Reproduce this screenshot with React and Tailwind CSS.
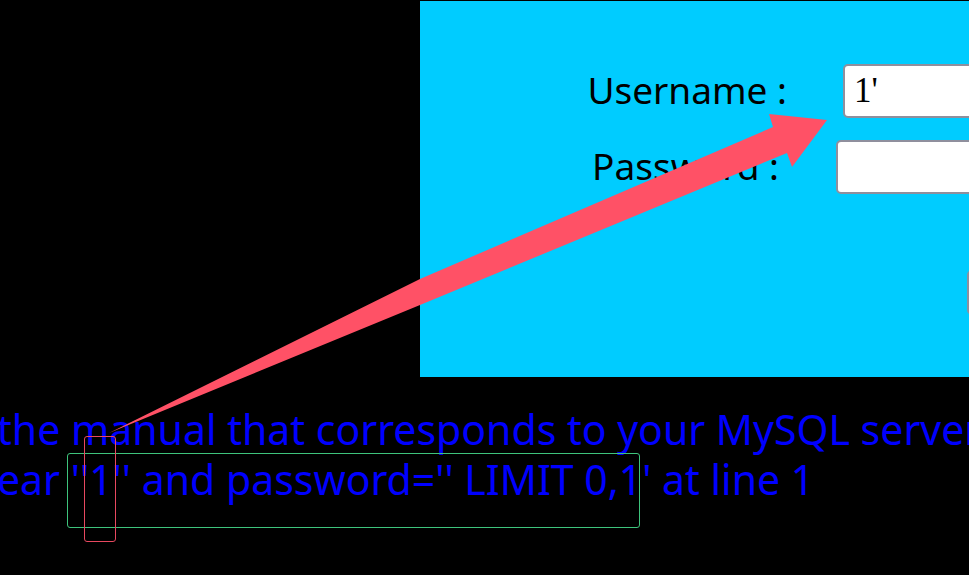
import React from "react";

// ─── Login panel (cyan form, cut off by the window on the right) ─────────────
function LoginPanel() {
  return (
    <div className="w-[549px] h-[376px] mt-px bg-[#00ccff] overflow-hidden shrink-0">
      <div className="pt-[63px] flex flex-col gap-[22px]">
        <div className="flex items-center">
          <label className="w-[367px] shrink-0 -mt-[4px] text-right text-[37px] text-black leading-none">
            Username :
          </label>
          <input
            readOnly
            value="1'"
            className="ml-[56px] w-[200px] h-[54px] shrink-0 rounded-[5px] border-2 border-[#8f8f9d] bg-white pl-[9px] text-[35px] text-black font-['Liberation_Serif',serif] outline-none"
          />
        </div>
        <div className="flex items-center">
          <label className="w-[359px] shrink-0 -mt-[4px] text-right text-[37px] text-black leading-none">
            Password :
          </label>
          <input
            readOnly
            type="password"
            className="ml-[57px] w-[200px] h-[54px] shrink-0 rounded-[5px] border-2 border-[#8f8f9d] bg-white outline-none"
          />
        </div>
        <div className="flex mt-[54px]">
          <button className="ml-[547px] w-[120px] h-[45px] shrink-0 rounded-[5px] border-2 border-[#8f8f9d] bg-[#e9e9ed]" />
        </div>
      </div>
    </div>
  );
}

// ─── Screenshot annotations (arrow + highlight boxes) ─────────────────────────
function Annotations() {
  return (
    <>
      <svg
        className="absolute inset-0 pointer-events-none"
        width="969"
        height="575"
        viewBox="0 0 969 575"
      >
        <polygon
          points="109,433 420,279 773,127 769,114 827,120 792,167 787,153 420,305"
          fill="#ff5166"
        />
      </svg>
      <div className="absolute left-[67px] top-[453px] w-[573px] h-[75px] rounded-[3px] border border-[#3ec47c]" />
      <div className="absolute left-[84px] top-[436px] w-[32px] h-[106px] rounded-[3px] border border-[#e8485f]" />
    </>
  );
}

export default function App() {
  return (
    <div className="relative w-[969px] h-[575px] bg-black overflow-hidden font-['Noto_Sans',sans-serif]">
      <div className="flex">
        <div className="w-[420px] shrink-0" />
        <LoginPanel />
      </div>

      {/* ── MySQL error message ── */}
      <div className="mt-[27px] -ml-[3px] text-[41px] leading-[50px] text-[#0000ff] whitespace-nowrap">
        <p>the manual that corresponds to your MySQL server</p>
        <p>ear ''1'' and password='' LIMIT 0,1' at line 1</p>
      </div>

      <Annotations />
    </div>
  );
}
